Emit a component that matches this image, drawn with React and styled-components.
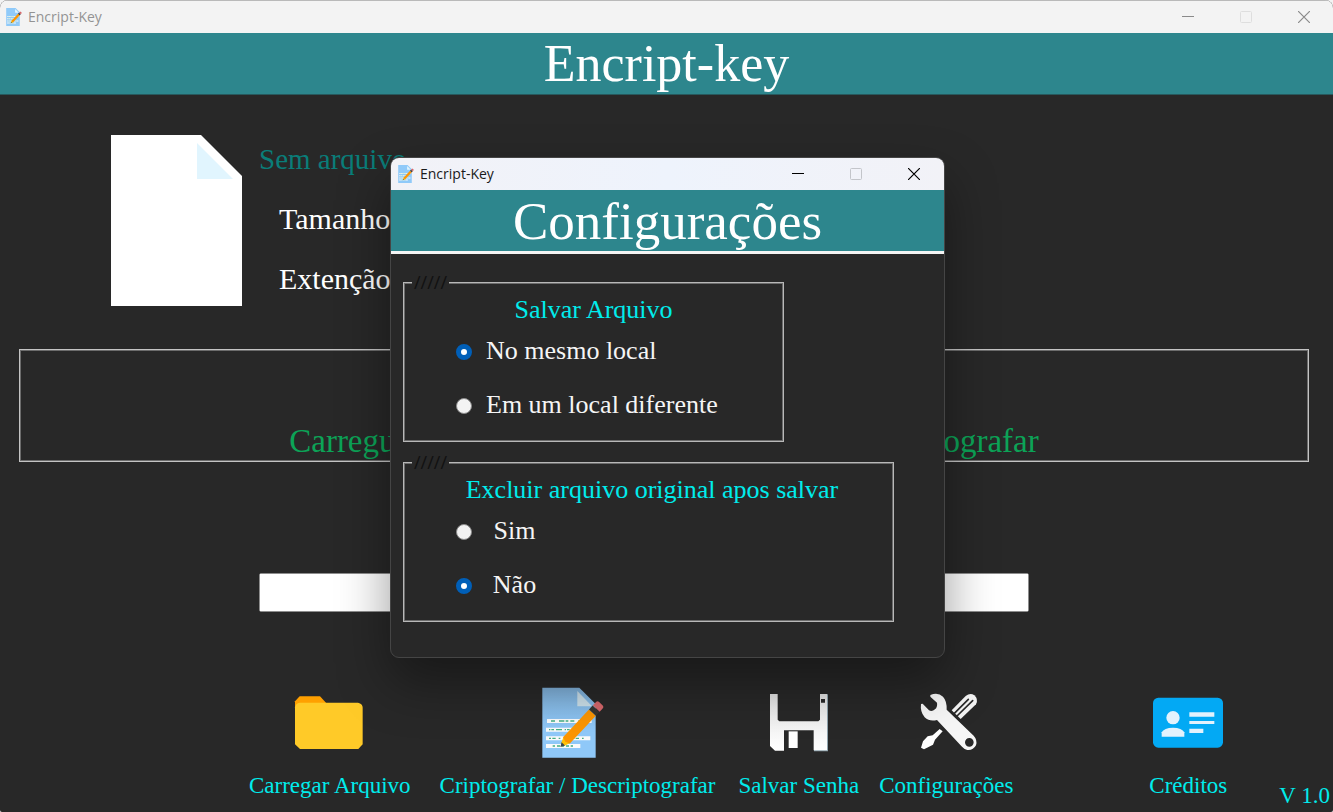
import React, { useState } from "react";
import styled, { createGlobalStyle } from "styled-components";

const serif = `"Liberation Serif", "Times New Roman", serif`;
const sans = `"Open Sans", "Segoe UI", sans-serif`;

const GlobalStyle = createGlobalStyle`
  *, *::before, *::after { box-sizing: border-box; }
  body { margin: 0; background: #f3f3f3; font-family: ${serif}; }
  button { font: inherit; color: inherit; background: none; border: 0; padding: 0; cursor: pointer; }
`;

const Window = styled.div`
  position: relative;
  display: flex;
  flex-direction: column;
  min-height: 100vh;
  background: #282828;
  border-radius: 8px 8px 2px 2px;
  overflow: hidden;
`;

const TitleBar = styled.div`
  display: flex;
  align-items: center;
  flex: none;
  height: ${(p) => (p.$active ? 32 : 33)}px;
  padding: 0 ${(p) => (p.$active ? 1 : 0)}px 0 ${(p) => (p.$active ? 7 : 6)}px;
  gap: 6px;
  background: ${(p) => (p.$active ? "linear-gradient(90deg, #f2f2f7, #eef3fc 50%, #f2f2f7)" : "#f3f3f3")};
  border-top: ${(p) => (p.$active ? "0" : "1px solid #b9b9b9")};
  color: ${(p) => (p.$active ? "#1a1a1a" : "#939393")};
  font: 14px/20px ${sans};
`;

const AppName = styled.span`
  flex: 1;
`;

const Controls = styled.div`
  display: flex;
  align-self: stretch;
`;

const ControlButton = styled.button`
  display: grid;
  place-items: center;
  width: 58px;
  color: ${(p) => (p.$active ? "#000" : "#8a8a8a")};
  &:disabled { color: ${(p) => (p.$active ? "#c3c5ca" : "#dedede")}; }
`;

const Banner = styled.h1`
  margin: 0;
  flex: none;
  height: ${(p) => (p.$ruled ? 64 : 62)}px;
  background: #2d868d;
  border-bottom: ${(p) => (p.$ruled ? "3px solid #f4f4f4" : "1px solid #27595d")};
  color: #fff;
  font: ${(p) => (p.$ruled ? 53 : 52)}px/62px ${serif};
  text-align: center;
`;

const FileInfo = styled.section`
  display: flex;
  align-items: center;
  gap: 17px;
  padding: 34px 0 0 111px;
`;

const FileLines = styled.div`
  display: flex;
  flex-direction: column;
  line-height: 60px;
  color: #fff;
`;

const FileName = styled.span`
  color: #0a7d79;
  font-size: 29px;
`;

const FileDetail = styled.span`
  padding-left: 20px;
  font-size: 30px;
`;

const FilePicture = styled.svg`
  margin-top: 2px;
`;

const StatusBox = styled.section`
  display: flex;
  align-items: flex-end;
  justify-content: center;
  height: 113px;
  margin: 40px 24px 0 19px;
  border: 1px solid #c4c4c4;
  box-shadow: inset 0 0 0 1px #6c6c6c;
  color: #0ca357;
  font-size: 33px;
  line-height: 40px;
`;

const Progress = styled.progress`
  appearance: none;
  display: block;
  width: auto;
  height: 39px;
  margin: 111px 304px 0 259px;
  border: 1px solid #8d8d8d;
  border-radius: 2px;
  background: #fff;
  &::-webkit-progress-bar { background: #fff; }
  &::-webkit-progress-value { background: #06b025; }
`;

const Toolbar = styled.nav`
  display: flex;
  flex: 1;
  align-items: flex-start;
  gap: 20px;
  padding: 74px 3px 2px 249px;
  color: #00ecec;
  font-size: 23px;
  line-height: 28px;
`;

const ToolButton = styled.button`
  display: flex;
  flex-direction: column;
  align-items: center;
  gap: 14px;
  white-space: nowrap;
  margin-left: ${(p) => p.$space || 0}px;
`;

const Version = styled.span`
  margin-left: auto;
  align-self: flex-end;
  white-space: nowrap;
`;

const Overlay = styled.div`
  position: absolute;
  inset: 0;
  display: flex;
  justify-content: center;
  align-items: flex-start;
  padding: 157px 0 0 2px;
`;

const Dialog = styled.div`
  width: 555px;
  padding-bottom: 35px;
  background: #282828;
  border: 1px solid #454545;
  border-radius: 9px;
  overflow: hidden;
  box-shadow: 0 24px 52px rgba(0, 0, 0, 0.4);
`;

const Groups = styled.form`
  display: flex;
  flex-direction: column;
  align-items: flex-start;
  gap: 9px;
  padding: 17px 12px 0;
`;

const Group = styled.fieldset`
  width: ${(p) => p.$width}px;
  margin: 0;
  padding: 1px 0 8px;
  border: 1px solid #b8b8b8;
  box-shadow: inset 0 0 0 1px #6c6c6c;
  color: #f5f5f5;
  font-size: 26px;
`;

const Legend = styled.legend`
  margin-left: 8px;
  padding: 0 2px;
  background: #282828;
  color: #111;
  font: 18px/22px ${sans};
`;

const GroupTitle = styled.h2`
  margin: 0;
  padding-left: ${(p) => p.$indent || 0}px;
  color: #00ecec;
  font: 26px/31px ${serif};
  text-align: center;
`;

const Option = styled.label`
  display: flex;
  align-items: center;
  gap: 14px;
  height: 54px;
  padding-left: 52px;
`;

const OptionText = styled.span`
  min-width: 57px;
  text-align: center;
  line-height: 30px;
  padding-bottom: 2px;
`;

const Radio = styled.input`
  appearance: none;
  width: 16px;
  height: 16px;
  margin: 0;
  border-radius: 50%;
  border: 1px solid #8a8a8a;
  background: #f3f3f3;
  &:checked {
    border: 5px solid #005fb8;
    background: #fff;
  }
`;

const NoteIcon = ({ width, height, viewBox }) => (
  <svg width={width} height={height} viewBox={viewBox} aria-hidden="true">
    <defs>
      <linearGradient id="sheet" x1="0" y1="0" x2="0" y2="1">
        <stop offset="0" stopColor="#80b1da" />
        <stop offset="0.6" stopColor="#8fc8f8" />
      </linearGradient>
    </defs>
    <path d="M907 53H1018L1067 102V263H907Z" fill={width > 20 ? "url(#sheet)" : "#90caf9"} />
    <path d="M1012 63V109H1056Z" fill={width > 20 ? "#cbdfe9" : "#e1f5fe"} />
    <path d="M921 147h134v12H921zM918 173h100v12H918zM918 199h133v12H918zM918 222h103v12H918z" fill="#fafafa" />
    <g stroke="#43ae84" strokeWidth="4" fill="none">
      <path d="M933 153h110" strokeDasharray="12 12 16 4 8 6" />
      <path d="M927 179h70" strokeDasharray="4 3 8 6 18 8" />
      <path d="M927 205h115" strokeDasharray="6 4 10 9 5 36" />
      <path d="M938 228h62" strokeDasharray="7 6 9 5" />
    </g>
    <g transform="translate(961 231) rotate(-47)">
      <path d="M10 -6L30 -14V14L10 6Z" fill="#ffc107" />
      <path d="M0 0L13 -7V7Z" fill="#37474f" />
      <path d="M27 -14H141V14H27L22 0Z" fill="#fb9502" />
      <path d="M141 -14H157V14H141Z" fill="#37342f" />
      <path d="M158 -14H172Q178 -14 178 -8V8Q178 14 172 14H158Z" fill="#d5676b" />
    </g>
  </svg>
);

const FileIcon = () => (
  <FilePicture width="131" height="171" viewBox="0 0 131 171" aria-hidden="true">
    <path d="M0 0H90L131 41V171H0Z" fill="#fff" />
    <path d="M86 8V44H122Z" fill="#e1f5fe" />
  </FilePicture>
);

const FolderIcon = () => (
  <svg width="72" height="72" viewBox="162 48 216 216" aria-hidden="true">
    <path d="M165 130V94L179 79H240L262 103V130Z" fill="#ffa000" />
    <path d="M179 98H354Q368 101 368 113V223L355 237H180L165 223V112Q167 100 179 98Z" fill="#ffca28" />
  </svg>
);

const FloppyIcon = () => (
  <svg width="72" height="72" viewBox="369 48 216 216" aria-hidden="true">
    <defs>
      <linearGradient id="floppy" x1="0" y1="0" x2="0" y2="1">
        <stop offset="0" stopColor="#e4e4e4" />
        <stop offset="1" stopColor="#fff" />
      </linearGradient>
    </defs>
    <path d="M560 73h4v171h-42v-4h38z" fill="#90a4ae" />
    <path
      fill="url(#floppy)"
      fillRule="evenodd"
      d="M390 72H413V149L418 154H535L540 149V72H561V241H521V181H432V242H405L390 228ZM543 87V98H555V87Z"
    />
    <path d="M446 184h27v50h-27z" fill="#fff" />
  </svg>
);

const ToolsIcon = () => (
  <svg width="72" height="72" viewBox="811 48 216 216" aria-hidden="true">
    <path
      d="M936 121L978 78Q992 67 1004 76Q1017 87 1009 103L963 147Z"
      fill="#f4f4f4"
    />
    <path d="M944 130L986 88M952 138L999 92" stroke="#282828" strokeWidth="5" strokeLinecap="round" />
    <path d="M900 177L909 184L886 209L880 224L853 238L844 233L850 214L864 199L879 196Z" fill="#fff" />
    <path
      fillRule="evenodd"
      fill="#f6f6f6"
      d="M872 75Q895 66 910 80Q922 93 921 119L1002 197Q1014 210 1009 226Q1000 242 983 240Q974 238 967 230L892 150Q870 156 855 142Q841 126 844 102L849 101L868 121Q877 126 886 118Q894 111 892 98L872 80ZM989 204A13 13 0 1 0 989 230A13 13 0 1 0 989 204Z"
    />
  </svg>
);

const CardIcon = () => (
  <svg width="72" height="72" viewBox="338 48 216 216" aria-hidden="true">
    <rect x="341" y="83" width="210" height="150" rx="16" fill="#03a9f4" />
    <g fill="#e3f2fd">
      <circle cx="401" cy="143" r="20" />
      <path d="M367 200V187Q374 173 401 173Q428 173 435 187V200Z" />
      <path d="M450 127h75v13h-75zM450 153h75v9h-75zM450 176h42v13h-42z" />
    </g>
  </svg>
);

const Caption = ({ active }) => (
  <TitleBar $active={active}>
    <NoteIcon width={16} height={18} viewBox="906 52 186 212" />
    <AppName>Encript-Key</AppName>
    <Controls>
      <ControlButton $active={active} aria-label="Minimizar">
        <svg width="12" height="12" aria-hidden="true"><path d="M0 5.5h12" stroke="currentColor" /></svg>
      </ControlButton>
      <ControlButton $active={active} aria-label="Maximizar" disabled>
        <svg width="12" height="12" aria-hidden="true">
          <rect x=".5" y=".5" width="11" height="11" rx="1" fill="none" stroke="currentColor" />
        </svg>
      </ControlButton>
      <ControlButton $active={active} aria-label="Fechar">
        <svg width="12" height="12" aria-hidden="true">
          <path d="M0 0L12 12M12 0L0 12" stroke="currentColor" strokeWidth="1.2" />
        </svg>
      </ControlButton>
    </Controls>
  </TitleBar>
);

function OptionGroup({ title, name, width, indent, options, initial }) {
  const [value, setValue] = useState(initial);
  return (
    <Group $width={width}>
      <Legend>/////</Legend>
      <GroupTitle $indent={indent}>{title}</GroupTitle>
      {options.map((option) => (
        <Option key={option}>
          <Radio type="radio" name={name} checked={value === option} onChange={() => setValue(option)} />
          <OptionText>{option}</OptionText>
        </Option>
      ))}
    </Group>
  );
}

export default function App() {
  return (
    <>
      <GlobalStyle />
      <Window>
        <Caption />
        <Banner>Encript-key</Banner>
        <FileInfo>
          <FileIcon />
          <FileLines>
            <FileName>Sem arquivo</FileName>
            <FileDetail>Tamanho</FileDetail>
            <FileDetail>Extenção</FileDetail>
          </FileLines>
        </FileInfo>
        <StatusBox>Carregue um arquivo para Criptografar / Descriptografar</StatusBox>
        <Progress value={0} max={100} aria-label="Progresso" />
        <Toolbar>
          <ToolButton><FolderIcon />Carregar Arquivo</ToolButton>
          <ToolButton $space={9}>
            <NoteIcon width={72} height={72} viewBox="906 48 216 216" />
            Criptografar / Descriptografar
          </ToolButton>
          <ToolButton $space={3}><FloppyIcon />Salvar Senha</ToolButton>
          <ToolButton><ToolsIcon />Configurações</ToolButton>
          <ToolButton $space={116}><CardIcon />Créditos</ToolButton>
          <Version>V 1.0</Version>
        </Toolbar>
        <Overlay>
          <Dialog role="dialog" aria-label="Configurações">
            <Caption active />
            <Banner as="h2" $ruled>Configurações</Banner>
            <Groups>
              <OptionGroup
                title="Salvar Arquivo"
                name="destino"
                width={381}
                options={["No mesmo local", "Em um local diferente"]}
                initial="No mesmo local"
              />
              <OptionGroup
                title="Excluir arquivo original apos salvar"
                name="excluir"
                width={491}
                indent={7}
                options={["Sim", "Não"]}
                initial="Não"
              />
            </Groups>
          </Dialog>
        </Overlay>
      </Window>
    </>
  );
}
